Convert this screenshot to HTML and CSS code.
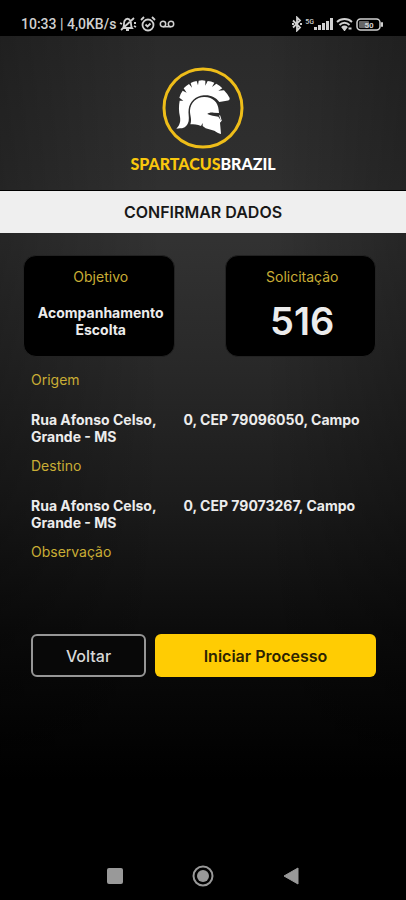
FILE: index.html
```html
<!DOCTYPE html>
<html lang="pt-BR">
<head>
<meta charset="utf-8">
<meta name="viewport" content="width=device-width, initial-scale=1">
<title>Confirmar dados</title>
<link rel="stylesheet" href="styles.css">
</head>
<body>
<div class="screen">
  <div class="status">
    <div class="status-group">
      <span>10:33 | 4,0KB/s</span>
      <svg width="18" height="16" viewBox="0 0 18 16" fill="none" stroke="currentColor" stroke-width="1.800"><path d="M4 12h9c-1.500-2-.5-5-1.500-7C10 2 7 2 5.500 5 4.500 7 5.500 10 4 12zM7 14h3M2 14 15 2M1 7l2 1M15 7l2 0M15 10l2 1"/></svg>
      <svg width="16" height="16" viewBox="0 0 16 16" fill="none" stroke="currentColor" stroke-width="1.800"><circle cx="8" cy="9" r="5.500"/><path d="M1 4l3-3M15 4l-3-3M5.500 8.500l2 2 3-3"/></svg>
      <svg width="16" height="16" viewBox="0 0 16 16" fill="none" stroke="currentColor" stroke-width="1.500"><circle cx="4" cy="8" r="2.700"/><circle cx="12" cy="8" r="2.700"/><path d="M4 10.700h8"/></svg>
    </div>
    <div class="status-group status-right">
      <svg width="10" height="16" viewBox="0 0 10 16" fill="none" stroke="currentColor" stroke-width="1.800"><path d="M1 4.500l7 7-3 3v-13l3 3-7 7M0 8h2M8 8h2"/></svg>
      <span class="signal"><span class="net">5G</span>
      <svg width="19" height="12" viewBox="0 0 19 12" fill="currentColor"><path d="M0 9h3v3H0zM4 7h3v5H4zM8 5h3v7H8zM12 3h3v9h-3zM16 0h3v12h-3z"/></svg></span>
      <svg width="17" height="14" viewBox="0 0 17 14" fill="none" stroke="currentColor" stroke-width="1.800"><path d="M1 5c4-4 11-4 15 0M3.500 8c3-3 7-3 10 0M6 10.500c1.500-1.500 3.500-1.500 5 0"/><path d="M7 11l1.500 2L10 11zM12.500 11.500h3"/></svg>
      <svg width="28" height="13" viewBox="0 0 28 13"><rect x="1" y="1" width="23" height="11" rx="3.500" fill="none" stroke="currentColor" stroke-width="1.500"/><rect x="3" y="3" width="10" height="7" rx="1" fill="#666"/><path d="M25.500 4.500v4h1v-4z" stroke="currentColor"/><text x="13" y="9.500" class="level">50</text></svg>
    </div>
  </div>

  <header class="brand">
    <svg class="emblem" viewBox="24 20 246 246" aria-hidden="true">
      <circle cx="147" cy="143" r="117" fill="none" stroke="#eebd19" stroke-width="9"/>
      <path fill="#fff" d="M67 205C78 194 80 183 78 170C74 152 74 137 77 121L88 121L76 112Q79 100 86 91L98 97L89 84Q96 76 105 71L114 82L110 68Q118 64 128 62L132 75L134 61Q144 59 154 61L154 76L161 62Q171 63 181 67L174 80L187 70Q197 75 205 84L193 91L210 90Q220 100 227 113Q228 121 218 121L196 125C185 110 168 103 149 105C124 107 107 124 104 147C102 160 106 170 104 182C101 196 91 205 78 204Z"/>
      <path fill="#fff" d="M109 192C115 177 107 165 108 150C110 126 127 111 150 110C176 109 192 126 194 149L195 158L179 157C170 156 163 158 160 161C170 166 182 168 193 169L202 183L198 187L201 221C194 219 187 215 181 211L155 204L146 197L146 188L141 197C130 193 120 192 109 192Z"/>
      <path d="M197 165l5 17" stroke="#fff" stroke-width="3"/>
    </svg>
    <div class="wordmark"><span class="gold">SPARTACUS</span>BRAZIL</div>
  </header>

  <h1 class="title">CONFIRMAR DADOS</h1>

  <main>
    <div class="cards">
      <section class="card">
        <h2 class="label">Objetivo</h2>
        <p class="goal">Acompanhamento Escolta</p>
      </section>
      <section class="card">
        <h2 class="label">Solicitação</h2>
        <p class="number">516</p>
      </section>
    </div>
    <div class="details">
      <h2 class="label">Origem</h2>
      <p class="address">Rua Afonso Celso, <span class="place">0, CEP 79096050, Campo</span> Grande - MS</p>
      <h2 class="label">Destino</h2>
      <p class="address">Rua Afonso Celso, <span class="place">0, CEP 79073267, Campo</span> Grande - MS</p>
      <h2 class="label">Observação</h2>
    </div>
    <div class="actions">
      <button class="btn back" type="button">Voltar</button>
      <button class="btn start" type="button">Iniciar Processo</button>
    </div>
  </main>

  <nav class="system">
    <button type="button" aria-label="Recentes"><svg width="24" height="24" viewBox="0 0 24 24"><rect x="4" y="4" width="16" height="16" rx="2" fill="currentColor"/></svg></button>
    <button type="button" aria-label="Início"><svg width="24" height="24" viewBox="0 0 24 24"><circle cx="12" cy="12" r="9.500" fill="none" stroke="currentColor" stroke-width="2"/><circle cx="12" cy="12" r="6" fill="currentColor"/></svg></button>
    <button type="button" aria-label="Voltar à tela anterior"><svg width="24" height="24" viewBox="0 0 24 24"><path d="M19 4v16L5 12z" fill="currentColor" stroke="currentColor" stroke-linejoin="round"/></svg></button>
  </nav>
</div>
</body>
</html>
```
FILE: styles.css
```css
* {
  box-sizing: border-box;
}

body {
  margin: 0;
  background: #000;
  color: #ececec;
  font-family: Inter, Roboto, sans-serif;
}

h1, h2, p {
  margin: 0;
}

.screen {
  display: flex;
  flex-direction: column;
  min-height: 100vh;
  background:
    linear-gradient(90deg, rgba(0, 0, 0, 0.25), transparent 40%, transparent 65%, rgba(0, 0, 0, 0.25)),
    linear-gradient(#2a2a2a 36px, #323232 240px, #282828 370px, #1c1c1c 500px, #0c0c0c 630px, #000 780px);
}

.status {
  display: flex;
  justify-content: space-between;
  align-items: center;
  height: 36px;
  padding: 12px 22px 0 21px;
  background: #000;
  color: #d0d0d0;
  font: 500 14px/24px Roboto, sans-serif;
}

.status-group {
  display: flex;
  align-items: center;
  gap: 3px;
}

.signal {
  display: flex;
  align-items: center;
}

.net {
  align-self: flex-start;
  font-size: 7px;
  line-height: 8px;
}

.level {
  fill: currentColor;
  font: 700 8px Roboto, sans-serif;
  text-anchor: middle;
}

.brand {
  display: flex;
  flex-direction: column;
  align-items: center;
  padding: 31px 0 15px;
}

.emblem {
  width: 82px;
  height: 82px;
}

.wordmark {
  margin-top: 4px;
  color: #fff;
  font: 900 16px/22px Lato, sans-serif;
}

.gold {
  color: #f9c70d;
}

.title {
  border-top: 1px solid #000;
  background: #efefef;
  color: #181818;
  font-size: 16px;
  font-weight: 600;
  line-height: 42px;
  text-align: center;
}

.cards {
  display: grid;
  grid-template-columns: 1fr 1fr;
  gap: 50px;
  padding: 22px 30px 0 23px;
}

.card {
  min-height: 102px;
  padding: 12px 6px 12px 10px;
  border: 1px solid #222;
  border-radius: 13px;
  background: #000;
  text-align: center;
}

.label {
  color: #c9ad35;
  font-size: 14px;
  font-weight: 400;
  line-height: 18px;
}

.goal {
  margin-top: 18px;
  font-size: 14px;
  font-weight: 700;
  line-height: 17px;
}

.number {
  margin-top: 12px;
  font-size: 38px;
  font-weight: 600;
  line-height: 46px;
}

.details {
  padding: 14px 31px 0;
}

.address {
  margin: 22px 0 12px;
  font-size: 14px;
  font-weight: 700;
  line-height: 17px;
}

.place {
  margin-left: 24px;
}

.actions {
  display: grid;
  grid-template-columns: 115fr 221fr;
  gap: 9px;
  padding: 73px 30px 0 31px;
}

.btn {
  height: 43px;
  border-radius: 6px;
  font: 500 16px/20px Inter, sans-serif;
}

.back {
  border: 2px solid #969696;
  background: #080808;
  color: #d8d8d8;
}

.start {
  border: 0;
  background: #ffcc03;
  color: #2c2302;
  font-weight: 600;
}

.system {
  display: flex;
  justify-content: center;
  gap: 64px;
  margin-top: auto;
  padding-bottom: 12px;
}

.system button {
  display: flex;
  padding: 0;
  border: 0;
  background: none;
  color: #999;
}
```
